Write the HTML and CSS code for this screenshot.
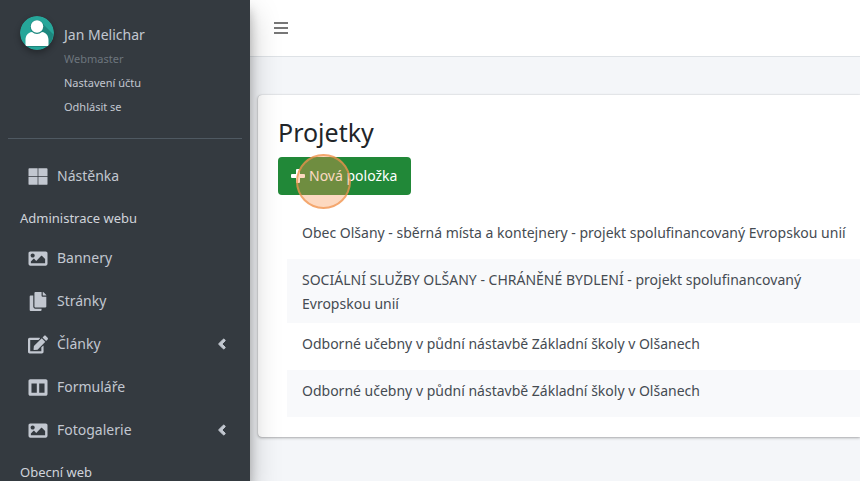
FILE: index.html
```
<!DOCTYPE html>
<html lang="cs">
<head>
    <meta charset="UTF-8">
    <meta name="viewport" content="width=device-width, initial-scale=1.0">
    <title>Projetky</title>
    <link rel="stylesheet" href="styles.css">
</head>
<body>

    <!-- Shared icon shapes -->
    <svg class="sprite" aria-hidden="true">
        <symbol id="icon-image" viewBox="0 0 512 512">
            <path d="M464 448H48c-26.500 0-48-21.500-48-48V112c0-26.500 21.500-48 48-48h416c26.500 0 48 21.500 48 48v288c0 26.500-21.500 48-48 48zM112 120c-31 0-56 25-56 56s25 56 56 56 56-25 56-56-25-56-56-56zM64 384h384V272l-87.500-87.500c-4.700-4.700-12.300-4.700-17 0L208 320l-55.500-55.500c-4.700-4.700-12.300-4.700-17 0L64 336v48z"/>
        </symbol>
        <symbol id="icon-left" viewBox="0 0 256 512">
            <path d="M31.700 239l136-136c9.400-9.400 24.600-9.400 33.900 0l22.600 22.600c9.400 9.400 9.400 24.600 0 33.900L127.900 256l96.400 96.400c9.400 9.400 9.400 24.600 0 33.900L201.700 409c-9.400 9.400-24.600 9.400-33.900 0l-136-136c-9.500-9.400-9.500-24.600-.1-34z" stroke-width="30"/>
        </symbol>
    </svg>

    <div class="wrapper">
        <aside class="sidebar">
            <div class="user-panel">
                <svg class="avatar" viewBox="0 0 34 34" aria-hidden="true">
                    <circle cx="17" cy="17" r="17" fill="#26a69a"/>
                    <path d="M22 7l11 11a17 17 0 0 1-6 13H7l-1-3z" fill="#1d877e"/>
                    <circle cx="17" cy="11" r="7" fill="#1d877e"/>
                    <circle cx="17" cy="10.500" r="6.200" fill="#fff"/>
                    <path d="M5.500 30v-6c0-4 2-7.500 6.500-8 3 2.500 7 2.500 10 0 4.500.5 6.500 4 6.500 8v6z" fill="#fff"/>
                </svg>
                <div class="user-info">
                    <a href="#" class="user-name">Jan Melichar</a>
                    <span class="user-role">Webmaster</span>
                    <a href="#">Nastavení účtu</a>
                    <a href="#">Odhlásit se</a>
                </div>
            </div>

            <nav>
                <ul class="menu">
                    <li>
                        <a href="#">
                            <svg class="icon" viewBox="0 0 512 512"><path d="M24 32h222v208H0V56c0-13 11-24 24-24zM266 32h222c13 0 24 11 24 24v184H266zM0 266h246v214H24c-13 0-24-11-24-24zM266 266h246v190c0 13-11 24-24 24H266z"/></svg>
                            <span>Nástěnka</span>
                        </a>
                    </li>
                    <li class="menu-header">Administrace webu</li>
                    <li>
                        <a href="#">
                            <svg class="icon"><use href="#icon-image"/></svg>
                            <span>Bannery</span>
                        </a>
                    </li>
                    <li>
                        <a href="#">
                            <svg class="icon" viewBox="0 0 448 512"><path d="M320 448v40c0 13.300-10.700 24-24 24H24c-13.300 0-24-10.700-24-24V120c0-13.300 10.700-24 24-24h72v296c0 30.900 25.100 56 56 56h168zm0-344V0H152c-13.300 0-24 10.700-24 24v368c0 13.300 10.700 24 24 24h272c13.300 0 24-10.700 24-24V128H344c-13.200 0-24-10.800-24-24zm121-31L375 7A24 24 0 0 0 358 0h-6v96h96v-6.100a24 24 0 0 0-7-16.900z"/></svg>
                            <span>Stránky</span>
                        </a>
                    </li>
                    <li>
                        <a href="#">
                            <svg class="icon" viewBox="0 0 576 512"><path d="M402.600 83.200l90.200 90.200c3.800 3.800 3.800 10 0 13.800L274.400 405.600l-92.800 10.300c-12.400 1.400-22.900-9.100-21.500-21.500l10.300-92.800L388.800 83.200c3.800-3.800 10-3.800 13.800 0zm162-22.900l-48.800-48.800c-15.200-15.200-39.900-15.200-55.200 0l-35.400 35.400c-3.800 3.800-3.800 10 0 13.800l90.200 90.200c3.800 3.800 10 3.800 13.800 0l35.400-35.400c15.200-15.300 15.200-40 0-55.200zM384 346.200V448H64V128h229.800c3.200 0 6.200-1.300 8.500-3.500l40-40c7.600-7.600 2.200-20.500-8.500-20.500H48C21.500 64 0 85.500 0 112v352c0 26.500 21.500 48 48 48h352c26.500 0 48-21.500 48-48V306.200c0-10.700-12.900-16-20.500-8.500l-40 40c-2.200 2.300-3.500 5.300-3.500 8.500z"/></svg>
                            <span>Články</span>
                            <svg class="arrow"><use href="#icon-left"/></svg>
                        </a>
                    </li>
                    <li>
                        <a href="#">
                            <svg class="icon" viewBox="0 0 512 512"><path d="M464 32H48C21.500 32 0 53.500 0 80v352c0 26.500 21.500 48 48 48h416c26.500 0 48-21.500 48-48V80c0-26.500-21.500-48-48-48zM224 400H80V150h144v250zm208 0H288V150h144v250z"/></svg>
                            <span>Formuláře</span>
                        </a>
                    </li>
                    <li>
                        <a href="#">
                            <svg class="icon"><use href="#icon-image"/></svg>
                            <span>Fotogalerie</span>
                            <svg class="arrow"><use href="#icon-left"/></svg>
                        </a>
                    </li>
                    <li class="menu-header">Obecní web</li>
                </ul>
            </nav>
        </aside>

        <div class="page">
            <header class="navbar">
                <button type="button" class="toggle" aria-label="Menu">
                    <svg viewBox="0 0 14 12"><path d="M0 0h14v2H0zM0 5h14v2H0zM0 10h14v2H0z"/></svg>
                </button>
            </header>

            <main class="card">
                <h1>Projetky</h1>
                <button type="button" class="btn-new">
                    <svg viewBox="0 0 14 14"><path d="M6 0h2q1 0 1 1v4h4q1 0 1 1v2q0 1-1 1H9v4q0 1-1 1H6q-1 0-1-1V9H1q-1 0-1-1V6q0-1 1-1h4V1q0-1 1-1z"/></svg>
                    Nová položka
                    <span class="click-mark"></span>
                </button>

                <table class="items">
                    <tbody>
                        <tr><td>Obec Olšany - sběrná místa a kontejnery - projekt spolufinancovaný Evropskou unií</td></tr>
                        <tr><td>SOCIÁLNÍ SLUŽBY OLŠANY - CHRÁNĚNÉ BYDLENÍ - projekt spolufinancovaný Evropskou unií</td></tr>
                        <tr><td>Odborné učebny v půdní nástavbě Základní školy v Olšanech</td></tr>
                        <tr><td>Odborné učebny v půdní nástavbě Základní školy v Olšanech</td></tr>
                    </tbody>
                </table>
            </main>
        </div>
    </div>

</body>
</html>
```
FILE: styles.css
```
* {
    box-sizing: border-box;
}

body {
    margin: 0;
    font-family: "Noto Sans", "Open Sans", sans-serif;
    font-size: 14px;
    line-height: 24px;
    color: #212529;
    background-color: #f4f6f9;
}

a {
    color: #c2c7d0;
    text-decoration: none;
}

button {
    font: inherit;
    border: none;
    cursor: pointer;
}

.sprite {
    position: absolute;
    width: 0;
    height: 0;
}

.wrapper {
    display: flex;
    height: 100vh;
    overflow: hidden;
}

/* Sidebar */
.sidebar {
    position: relative;
    flex: 0 0 250px;
    padding: 0 8px;
    overflow: hidden;
    background-color: #343a40;
    box-shadow: 0 14px 28px rgba(0, 0, 0, 0.25), 0 10px 10px rgba(0, 0, 0, 0.22);
}

.user-panel {
    display: flex;
    gap: 10px;
    padding: 16px 12px 19px;
    border-bottom: 1px solid #4f5962;
}

.avatar {
    flex: none;
    width: 34px;
    height: 34px;
    border-radius: 50%;
    box-shadow: 0 3px 6px rgba(0, 0, 0, 0.3);
}

.user-info {
    display: flex;
    flex-direction: column;
    padding-top: 7px;
    font-size: 11px;
}

.user-name {
    font-size: 14px;
}

.user-role {
    color: #6c757d;
}

.menu {
    margin: 0;
    padding: 17px 0 0;
    list-style: none;
}

.menu a {
    display: flex;
    align-items: center;
    gap: 9px;
    padding: 8px 15px 8px 20px;
    margin-bottom: 3px;
}

.menu-header {
    padding: 7px 12px 8px;
    font-size: 13px;
    color: #d0d4db;
}

.icon {
    width: 20px;
    height: 19px;
    fill: #c2c7d0;
}

.arrow {
    width: 10px;
    height: 16px;
    margin-left: auto;
    fill: #c2c7d0;
    stroke: #c2c7d0;
}

/* Content */
.page {
    flex: 1;
    min-width: 0;
}

.navbar {
    display: flex;
    align-items: center;
    height: 57px;
    padding: 0 16px;
    background-color: #fff;
    border-bottom: 1px solid #dee2e6;
}

.toggle {
    padding: 8px;
    background: none;
}

.toggle svg {
    display: block;
    width: 14px;
    height: 12px;
    fill: #777;
}

.card {
    margin: 38px 0 0 8px;
    padding: 20px 0 20px 20px;
    background-color: #fff;
    border-radius: 4px 0 0 4px;
    box-shadow: 0 0 1px rgba(0, 0, 0, 0.3), 0 1px 3px rgba(0, 0, 0, 0.3);
}

h1 {
    margin: 0 0 8px;
    font-size: 25px;
    font-weight: 400;
    line-height: 34px;
}

.btn-new {
    position: relative;
    display: flex;
    align-items: center;
    gap: 4px;
    height: 38px;
    padding: 0 14px 0 13px;
    color: #fff;
    background-color: #218838;
    border-radius: 4px;
}

.btn-new svg {
    width: 14px;
    height: 14px;
    fill: #fff;
}

/* Highlight ring over the button */
.click-mark {
    position: absolute;
    top: -3px;
    left: 18px;
    width: 55px;
    height: 55px;
    border: 2px solid rgba(240, 145, 75, 0.7);
    border-radius: 50%;
    background-color: rgba(250, 150, 80, 0.36);
}

.items {
    width: calc(100% - 9px);
    margin: 17px 0 0 9px;
    border-collapse: collapse;
}

.items td {
    height: 47px;
    padding: 9px 0 7px 15px;
    vertical-align: top;
    color: #454b52;
}

.items tr:nth-child(even) {
    background-color: #f8f9fb;
}
```
